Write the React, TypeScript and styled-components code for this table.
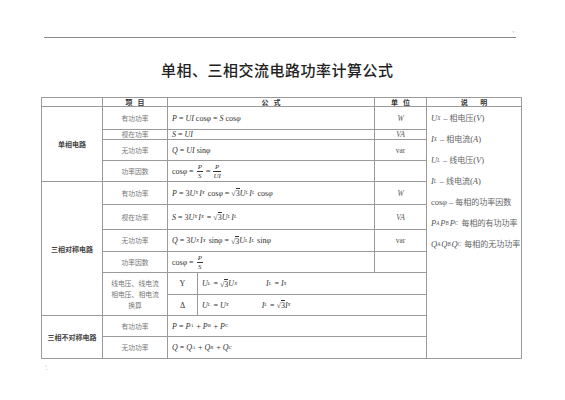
import React from "react";
import styled, { createGlobalStyle } from "styled-components";

const GlobalStyle = createGlobalStyle`
  html, body {
    margin: 0;
    padding: 0;
    background: #ffffff;
  }
  body {
    font-family: "Noto Sans CJK SC", "Noto Sans", sans-serif;
    color: #333;
  }
`;

const Page = styled.div`
  width: 565px;
  height: 400px;
  overflow: hidden;
  display: flex;
  flex-direction: column;
  background: #fff;
`;

const RuleRow = styled.div`
  display: flex;
  align-items: flex-end;
  margin: 30px 0 0 44px;
  width: 480px;
`;

const Rule = styled.div`
  width: 472px;
  height: 6px;
  border-bottom: 1px solid #8a8a8a;
`;

const CornerMark = styled.span`
  font-size: 5px;
  line-height: 5px;
  color: #bbb;
  margin-left: -4px;
  margin-bottom: 3px;
`;

const Title = styled.h1`
  margin: 21px 0 0 161px;
  font-size: 15px;
  line-height: 22px;
  font-weight: 500;
  letter-spacing: 0.5px;
  color: #222;
`;

const Table = styled.div`
  margin: 16px 0 0 41px;
  width: 481px;
  display: grid;
  grid-template-columns: 60px 64px 29px 176px 51px 94px;
  grid-template-rows: 8px 22px 9px 20px 20px 22px 24px 21px 20px 21px 20px 20px 21px;
  gap: 1px;
  padding: 1px;
  background: #9a9a9a;
  box-sizing: border-box;
`;

const Cell = styled.div<{ $c: string; $r: string; $align?: string }>`
  grid-column: ${(p) => p.$c};
  grid-row: ${(p) => p.$r};
  background: #fff;
  display: flex;
  align-items: center;
  justify-content: ${(p) => p.$align || "center"};
  overflow: hidden;
  min-width: 0;
`;

const Head = styled(Cell)`
  font-size: 7px;
  line-height: 8px;
  font-weight: 700;
  color: #333;
  white-space: pre;
`;

const Category = styled(Cell)`
  font-size: 7px;
  font-weight: 700;
  color: #444;
`;

const Item = styled(Cell)`
  font-size: 6.8px;
  color: #777;
  text-align: center;
  line-height: 11px;
`;

const Formula = styled(Cell)`
  justify-content: flex-start;
  padding-left: 4px;
  font-family: "Liberation Serif", "DejaVu Serif", serif;
  font-size: 8px;
  color: #333;
  white-space: nowrap;
`;

const Unit = styled(Cell)`
  font-family: "Liberation Serif", serif;
  font-size: 7.5px;
  color: #555;
`;

const Sym = styled(Cell)`
  font-family: "Liberation Serif", serif;
  font-size: 8px;
  color: #333;
`;

const Notes = styled(Cell)`
  flex-direction: column;
  align-items: flex-start;
  justify-content: flex-start;
  padding-left: 4px;
`;

const NoteLine = styled.div`
  height: 21px;
  display: flex;
  align-items: center;
  font-size: 8.5px;
  color: #555;
  white-space: nowrap;
  font-family: "Liberation Serif", "Noto Sans CJK SC", serif;
`;

const Zh = styled.span`
  font-family: "Noto Sans CJK SC", sans-serif;
  font-size: 8px;
  color: #666;
`;

const V = styled.i`
  font-family: "Liberation Serif", serif;
  font-style: italic;
`;

const Sub = styled.sub`
  font-size: 0.6em;
  vertical-align: -0.35em;
  line-height: 0;
  font-style: italic;
  margin-right: 1px;
`;

const Op = styled.span`
  margin: 0 2px;
`;

const Gap = styled.span<{ $w: number }>`
  display: inline-block;
  width: ${(p) => p.$w}px;
`;

const FracBox = styled.span`
  display: inline-flex;
  flex-direction: column;
  align-items: center;
  font-size: 7px;
  line-height: 8px;
  margin: 0 1px;
  font-style: italic;
`;

const FracTop = styled.span`
  border-bottom: 0.8px solid #333;
  padding: 0 1px;
  align-self: stretch;
  text-align: center;
`;

const Radical = styled.span`
  display: inline-flex;
  align-items: flex-end;
`;

const RadicalBody = styled.span`
  border-top: 0.8px solid #333;
  line-height: 9px;
`;

const BottomMark = styled.div`
  margin: 4px 0 0 45px;
  font-size: 6px;
  color: #aaa;
`;

const Frac = ({ top, bottom }: { top: React.ReactNode; bottom: React.ReactNode }) => (
  <FracBox>
    <FracTop>{top}</FracTop>
    <span>{bottom}</span>
  </FracBox>
);

const Sqrt3 = () => (
  <Radical>
    √<RadicalBody>3</RadicalBody>
  </Radical>
);

const Cos = () => (
  <span>
    cos<V>φ</V>
  </span>
);

const Sin = () => (
  <span>
    sin<V>φ</V>
  </span>
);

const Eq = () => <Op>=</Op>;
const Plus = () => <Op>+</Op>;

const UX = () => (
  <>
    <V>U</V>
    <Sub>X</Sub>
  </>
);
const IX = () => (
  <>
    <V>I</V>
    <Sub>X</Sub>
  </>
);
const UL = () => (
  <>
    <V>U</V>
    <Sub>L</Sub>
  </>
);
const IL = () => (
  <>
    <V>I</V>
    <Sub>L</Sub>
  </>
);

const F = "3 / 5";
const FW = "3 / 6";

export default function App() {
  return (
    <Page>
      <GlobalStyle />
      <RuleRow>
        <Rule />
        <CornerMark>ˇ</CornerMark>
      </RuleRow>
      <Title>单相、三相交流电路功率计算公式</Title>

      <Table>
        {/* header */}
        <Head $c="1" $r="1" />
        <Head $c="2" $r="1">项   目</Head>
        <Head $c="3 / 5" $r="1">公   式</Head>
        <Head $c="5" $r="1">单   位</Head>
        <Head $c="6" $r="1">说        明</Head>

        {/* single phase */}
        <Category $c="1" $r="2 / 6">单相电路</Category>
        <Item $c="2" $r="2">有功功率</Item>
        <Formula $c={F} $r="2">
          <V>P</V>
          <Eq />
          <V>UI</V>&nbsp;<Cos />
          <Eq />
          <V>S</V>&nbsp;<Cos />
        </Formula>
        <Unit $c="5" $r="2">
          <V>W</V>
        </Unit>

        <Item $c="2" $r="3">视在功率</Item>
        <Formula $c={F} $r="3">
          <V>S</V>
          <Eq />
          <V>UI</V>
        </Formula>
        <Unit $c="5" $r="3">
          <V>VA</V>
        </Unit>

        <Item $c="2" $r="4">无功功率</Item>
        <Formula $c={F} $r="4">
          <V>Q</V>
          <Eq />
          <V>UI</V>&nbsp;<Sin />
        </Formula>
        <Unit $c="5" $r="4">var</Unit>

        <Item $c="2" $r="5">功率因数</Item>
        <Formula $c={F} $r="5">
          <Cos />
          <Eq />
          <Frac top="P" bottom="S" />
          <Eq />
          <Frac top="P" bottom="UI" />
        </Formula>
        <Unit $c="5" $r="5" />

        {/* three phase symmetric */}
        <Category $c="1" $r="6 / 12">三相对称电路</Category>
        <Item $c="2" $r="6">有功功率</Item>
        <Formula $c={F} $r="6">
          <V>P</V>
          <Eq />
          3<UX />
          <IX />
          &nbsp;<Cos />
          <Eq />
          <Sqrt3 />
          <UL />
          <IL />
          &nbsp;<Cos />
        </Formula>
        <Unit $c="5" $r="6">
          <V>W</V>
        </Unit>

        <Item $c="2" $r="7">视在功率</Item>
        <Formula $c={F} $r="7">
          <V>S</V>
          <Eq />
          3<UX />
          <IX />
          <Eq />
          <Sqrt3 />
          <UL />
          <IL />
        </Formula>
        <Unit $c="5" $r="7">
          <V>VA</V>
        </Unit>

        <Item $c="2" $r="8">无功功率</Item>
        <Formula $c={F} $r="8">
          <V>Q</V>
          <Eq />
          3<UX />
          <IX />
          &nbsp;<Sin />
          <Eq />
          <Sqrt3 />
          <UL />
          <IL />
          &nbsp;<Sin />
        </Formula>
        <Unit $c="5" $r="8">var</Unit>

        <Item $c="2" $r="9">功率因数</Item>
        <Formula $c={F} $r="9">
          <Cos />
          <Eq />
          <Frac top="P" bottom="S" />
        </Formula>
        <Unit $c="5" $r="9" />

        <Item $c="2" $r="10 / 12">
          线电压、线电流
          <br />
          相电压、相电流
          <br />
          换算
        </Item>
        <Sym $c="3" $r="10">Y</Sym>
        <Formula $c="4 / 6" $r="10">
          <UL />
          <Eq />
          <Sqrt3 />
          <UX />
          <Gap $w={28} />
          <IL />
          <Eq />
          <IX />
        </Formula>
        <Sym $c="3" $r="11">Δ</Sym>
        <Formula $c="4 / 6" $r="11">
          <UL />
          <Eq />
          <UX />
          <Gap $w={32} />
          <IL />
          <Eq />
          <Sqrt3 />
          <IX />
        </Formula>

        {/* three phase asymmetric */}
        <Category $c="1" $r="12 / 14">三相不对称电路</Category>
        <Item $c="2" $r="12">有功功率</Item>
        <Formula $c={FW} $r="12">
          <V>P</V>
          <Eq />
          <V>P</V>
          <Sub>A</Sub>
          <Plus />
          <V>P</V>
          <Sub>B</Sub>
          <Plus />
          <V>P</V>
          <Sub>C</Sub>
        </Formula>
        <Item $c="2" $r="13">无功功率</Item>
        <Formula $c={FW} $r="13">
          <V>Q</V>
          <Eq />
          <V>Q</V>
          <Sub>A</Sub>
          <Plus />
          <V>Q</V>
          <Sub>B</Sub>
          <Plus />
          <V>Q</V>
          <Sub>C</Sub>
        </Formula>

        {/* notes */}
        <Notes $c="6" $r="2 / 14">
          <NoteLine>
            <UX />
            <Op>–</Op>
            <Zh>相电压</Zh>(<V>V</V>)
          </NoteLine>
          <NoteLine>
            <IX />
            <Op>–</Op>
            <Zh>相电流</Zh>(<V>A</V>)
          </NoteLine>
          <NoteLine>
            <UL />
            <Op>–</Op>
            <Zh>线电压</Zh>(<V>V</V>)
          </NoteLine>
          <NoteLine>
            <IL />
            <Op>–</Op>
            <Zh>线电流</Zh>(<V>A</V>)
          </NoteLine>
          <NoteLine>
            <Cos />
            <Op>–</Op>
            <Zh>每相的功率因数</Zh>
          </NoteLine>
          <NoteLine>
            <V>P</V>
            <Sub>A</Sub>
            <V>P</V>
            <Sub>B</Sub>
            <V>P</V>
            <Sub>C</Sub>
            &nbsp;<Zh>每相的有功功率</Zh>
          </NoteLine>
          <NoteLine>
            <V>Q</V>
            <Sub>A</Sub>
            <V>Q</V>
            <Sub>B</Sub>
            <V>Q</V>
            <Sub>C</Sub>
            &nbsp;<Zh>每相的无功功率</Zh>
          </NoteLine>
        </Notes>
      </Table>
      <BottomMark>'.</BottomMark>
    </Page>
  );
}
